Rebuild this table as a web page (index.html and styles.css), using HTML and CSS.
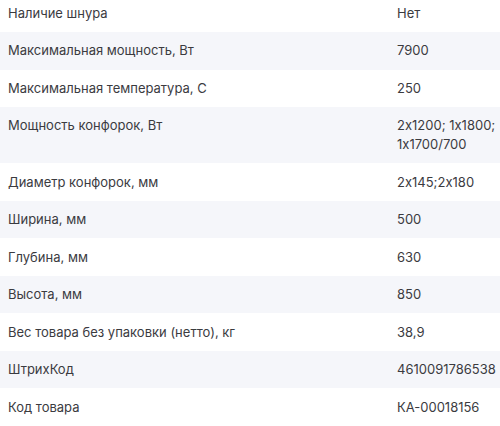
FILE: index.html
```html
<!DOCTYPE html>
<html lang="ru">
<head>
<meta charset="utf-8">
<link rel="stylesheet" href="styles.css">
</head>
<body>
<div class="specs">
  <div class="row"><div class="label">Наличие шнура</div><div class="value">Нет</div></div>
  <div class="row"><div class="label">Максимальная мощность, Вт</div><div class="value">7900</div></div>
  <div class="row"><div class="label">Максимальная температура, С</div><div class="value">250</div></div>
  <div class="row"><div class="label">Мощность конфорок, Вт</div><div class="value">2x1200; 1x1800; 1x1700/700</div></div>
  <div class="row"><div class="label">Диаметр конфорок, мм</div><div class="value">2x145;2x180</div></div>
  <div class="row"><div class="label">Ширина, мм</div><div class="value">500</div></div>
  <div class="row"><div class="label">Глубина, мм</div><div class="value">630</div></div>
  <div class="row"><div class="label">Высота, мм</div><div class="value">850</div></div>
  <div class="row"><div class="label">Вес товара без упаковки (нетто), кг</div><div class="value">38,9</div></div>
  <div class="row"><div class="label">ШтрихКод</div><div class="value">4610091786538</div></div>
  <div class="row"><div class="label">Код товара</div><div class="value">КА-00018156</div></div>
</div>
</body>
</html>
```
FILE: styles.css
```css
html, body {
  margin: 0;
  padding: 0;
  background: #ffffff;
}
body {
  font-family: Inter, "Noto Sans", sans-serif;
  font-size: 13px;
  font-feature-settings: "calt" 0;
  color: #3b3b3f;
  overflow: hidden;
}
.specs {
  margin-top: -5.5px;
  width: 500px;
}
.row {
  display: grid;
  grid-template-columns: 389px 1fr;
  line-height: 18.75px;
}
.row:nth-child(even) {
  background: #f5f6fa;
}
.row:last-child {
  border-bottom: 1px solid #eceef3;
}
.label {
  padding: 9.375px 8px;
}
.value {
  padding: 9.375px 2px 9.375px 8px;
}
```
